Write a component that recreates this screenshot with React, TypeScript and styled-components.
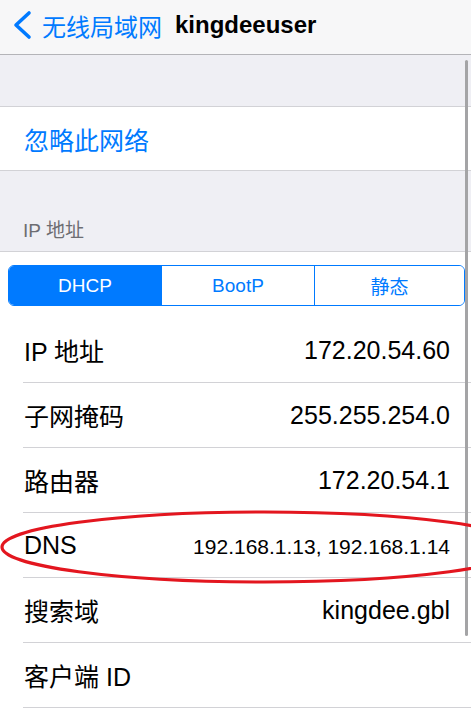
import React from "react";
import styled, { createGlobalStyle } from "styled-components";

const GlobalStyle = createGlobalStyle`
  body {
    margin: 0;
    background: #ffffff;
    font-family: "Liberation Sans", "Noto Sans CJK SC", sans-serif;
  }
`;

const Screen = styled.div`
  position: relative;
  width: 471px;
  height: 709px;
  overflow: hidden;
  background: #ffffff;
`;

const NavBar = styled.div`
  display: flex;
  align-items: center;
  height: 55px;
  padding: 0 0 4px 12px;
  box-sizing: border-box;
  background: #f7f7f8;
  border-bottom: 1px solid #b4b4b8;
`;

const BackButton = styled.div`
  display: flex;
  align-items: center;
  gap: 10px;
  color: #007aff;
  font-size: 24px;
`;

const NavTitle = styled.div`
  margin-left: 13px;
  font-size: 24px;
  font-weight: 700;
  color: #000000;
`;

const GroupGap = styled.div<{ $h: number }>`
  height: ${(p) => p.$h}px;
  background: #efeff4;
  border-bottom: 1px solid #d2d2d6;
  display: flex;
  align-items: flex-end;
  box-sizing: border-box;
`;

const SectionHeader = styled.div`
  padding: 0 0 9px 23px;
  font-size: 19px;
  color: #6d6d72;
`;

const LinkRow = styled.div`
  height: 63px;
  display: flex;
  align-items: center;
  padding-left: 24px;
  font-size: 25px;
  color: #007aff;
  border-bottom: 1px solid #d2d2d6;
`;

const SegmentArea = styled.div`
  padding: 13px 6px 12px 8px;
`;

const Segmented = styled.div`
  display: grid;
  grid-template-columns: 152px 153px 1fr;
  height: 41px;
  border: 1px solid #007aff;
  border-radius: 6px;
  overflow: hidden;
  box-sizing: border-box;
`;

const Segment = styled.div<{ $active?: boolean }>`
  display: flex;
  align-items: center;
  justify-content: center;
  font-size: 19px;
  color: ${(p) => (p.$active ? "#ffffff" : "#007aff")};
  background: ${(p) => (p.$active ? "#007aff" : "#ffffff")};
  & + & {
    border-left: 1px solid #007aff;
  }
`;

const Row = styled.div`
  padding-left: 23px;
`;

const RowInner = styled.div`
  height: 64px;
  display: flex;
  align-items: center;
  justify-content: space-between;
  padding: 0 21px 0 1px;
  font-size: 25px;
  color: #000000;
  border-bottom: 1px solid #d2d2d6;
`;

const Value = styled.span<{ $small?: boolean }>`
  font-size: ${(p) => (p.$small ? "21px" : "25px")};
  padding-top: ${(p) => (p.$small ? "3px" : "0")};
`;

const ScrollIndicator = styled.div`
  position: absolute;
  right: 3px;
  top: 60px;
  width: 3px;
  height: 576px;
  border-radius: 2px;
  background: #a4a4a6;
`;

const Annotation = styled.svg`
  position: absolute;
  left: 0;
  top: 505px;
  pointer-events: none;
`;

const rows: { label: string; value: string; small?: boolean }[] = [
  { label: "IP 地址", value: "172.20.54.60" },
  { label: "子网掩码", value: "255.255.254.0" },
  { label: "路由器", value: "172.20.54.1" },
  { label: "DNS", value: "192.168.1.13, 192.168.1.14", small: true },
  { label: "搜索域", value: "kingdee.gbl" },
  { label: "客户端 ID", value: "" },
];

export default function App() {
  return (
    <Screen>
      <GlobalStyle />
      <NavBar>
        <BackButton>
          <svg width="20" height="30" viewBox="0 0 20 30">
            <path d="M17 3 L4 15 L17 27" fill="none" stroke="#007aff" strokeWidth="3.6" strokeLinecap="round" strokeLinejoin="round" />
          </svg>
          无线局域网
        </BackButton>
        <NavTitle>kingdeeuser</NavTitle>
      </NavBar>
      <GroupGap $h={52} />
      <LinkRow>忽略此网络</LinkRow>
      <GroupGap $h={81}>
        <SectionHeader>IP 地址</SectionHeader>
      </GroupGap>
      <SegmentArea>
        <Segmented>
          <Segment $active>DHCP</Segment>
          <Segment>BootP</Segment>
          <Segment>静态</Segment>
        </Segmented>
      </SegmentArea>
      {rows.map((r) => (
        <Row key={r.label}>
          <RowInner>
            <span>{r.label}</span>
            <Value $small={r.small}>{r.value}</Value>
          </RowInner>
        </Row>
      ))}
      <ScrollIndicator />
      <Annotation width="471" height="90" viewBox="0 0 471 90">
        <ellipse cx="264" cy="42" rx="262" ry="35" fill="none" stroke="#e3161f" strokeWidth="3.2" />
      </Annotation>
    </Screen>
  );
}
